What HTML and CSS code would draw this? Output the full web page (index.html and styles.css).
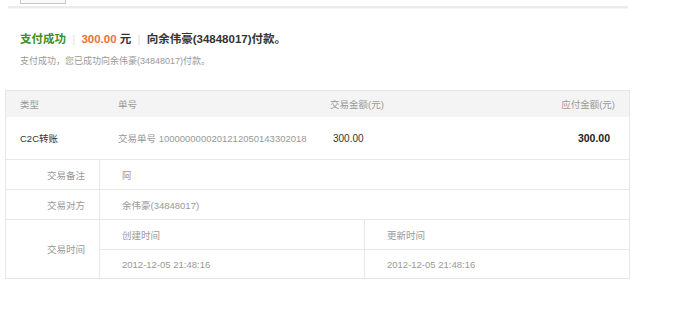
FILE: index.html
```html
<!DOCTYPE html>
<html lang="zh-CN">

<head>
    <meta charset="UTF-8">
    <title>支付成功</title>
    <link rel="stylesheet" href="styles.css">
</head>

<body>
    <div class="top">
        <div class="top-btn"></div>
    </div>
    <div class="top-line"></div>

    <div class="result">
        <h2 class="result-title">
            <span class="ok">支付成功</span>
            <span class="sep">|</span>
            <span class="money">300.00</span> 元
            <span class="sep">|</span>
            向余伟豪(34848017)付款。
        </h2>
        <p class="result-desc">支付成功，您已成功向余伟豪(34848017)付款。</p>
    </div>

    <div class="order">
        <div class="order-row order-head">
            <div>类型</div>
            <div>单号</div>
            <div>交易金额(元)</div>
            <div class="right">应付金额(元)</div>
        </div>
        <div class="order-row order-main">
            <div class="dark">C2C转账</div>
            <div>交易单号 1000000000201212050143302018</div>
            <div class="dark amount">300.00</div>
            <div class="right pay">300.00</div>
        </div>

        <div class="detail">
            <div class="detail-label">交易备注</div>
            <div class="detail-value">阿</div>
        </div>
        <div class="detail">
            <div class="detail-label">交易对方</div>
            <div class="detail-value">余伟豪(34848017)</div>
        </div>
        <div class="detail detail-time">
            <div class="detail-label">交易时间</div>
            <div class="time-grid">
                <div>创建时间</div>
                <div>更新时间</div>
                <div>2012-12-05 21:48:16</div>
                <div>2012-12-05 21:48:16</div>
            </div>
        </div>
    </div>
</body>

</html>
```

FILE: styles.css
```css
body {
    margin: 0;
    background: #fff;
    font-family: "Liberation Sans", "Noto Sans CJK SC", sans-serif;
    color: #333;
}

.top {
    height: 6px;
    padding-left: 20px;
}

.top-btn {
    width: 44px;
    height: 3px;
    border: 1px solid #c8c8c8;
    border-top: 0;
    background: #fafafa;
}

.top-line {
    margin-left: 8px;
    width: 620px;
    height: 2px;
    background: #ebebeb;
    box-shadow: 0 1px 1px #f4f4f4;
}

.result {
    padding: 23px 0 0 20px;
}

.result-title {
    margin: 0;
    font-size: 11.5px;
    line-height: 16px;
    font-weight: bold;
    color: #333;
}

.ok {
    color: #3f8f1f;
}

.money {
    color: #e8703a;
}

.sep {
    color: #ddd;
    font-weight: normal;
    padding: 0 3px;
}

.result-desc {
    margin: 8px 0 0;
    font-size: 9px;
    line-height: 12px;
    color: #999;
}

.order {
    margin: 23px 0 0 5px;
    width: 623px;
    border: 1px solid #e6e6e6;
    font-size: 9.5px;
    color: #999;
}

.order-row {
    display: grid;
    grid-template-columns: 98px 212px 1fr 1fr;
    align-items: center;
}

.order-row > div {
    padding-left: 14px;
}

.order-row > .right {
    text-align: right;
    padding-right: 14px;
}

.order-head {
    height: 26px;
    background: #f4f4f4;
}

.order-main {
    height: 42px;
}

.dark {
    color: #333;
}

.amount {
    font-size: 10px;
    padding-left: 17px !important;
}

.pay {
    color: #222;
    font-weight: bold;
    font-size: 10.5px;
    padding-right: 19px !important;
}

.detail {
    display: flex;
    border-top: 1px solid #e8e8e8;
    min-height: 29px;
}

.detail-label {
    width: 79px;
    padding-right: 14px;
    border-right: 1px solid #e8e8e8;
    text-align: right;
    display: flex;
    align-items: center;
    justify-content: flex-end;
}

.detail-value {
    flex: 1;
    padding-left: 22px;
    display: flex;
    align-items: center;
}

.time-grid {
    flex: 1;
    display: grid;
    grid-template-columns: 264px 1fr;
    grid-template-rows: 29px 29px;
}

.time-grid > div {
    padding-left: 22px;
    display: flex;
    align-items: center;
}

.time-grid > div:nth-child(2n) {
    border-left: 1px solid #e8e8e8;
}

.time-grid > div:nth-child(n+3) {
    border-top: 1px solid #e8e8e8;
}
```
